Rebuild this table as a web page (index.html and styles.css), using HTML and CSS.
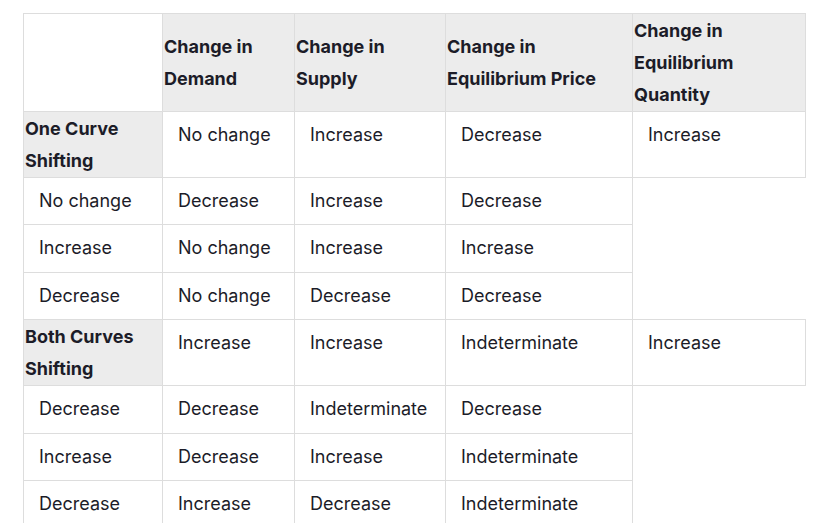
FILE: index.html
```html
<!DOCTYPE html>
<html>
<head>
<meta charset="utf-8">
<link rel="stylesheet" href="styles.css">
</head>
<body>
<div class="wrap">
<table class="grid">
  <colgroup>
    <col class="c1"><col class="c2"><col class="c3"><col class="c4"><col class="c5">
  </colgroup>
  <tr class="head">
    <td class="blank"></td>
    <th>Change in Demand</th>
    <th>Change in Supply</th>
    <th>Change in Equilibrium Price</th>
    <th>Change in Equilibrium Quantity</th>
  </tr>
  <tr>
    <th class="rowhead">One Curve Shifting</th>
    <td>No change</td>
    <td>Increase</td>
    <td>Decrease</td>
    <td>Increase</td>
  </tr>
  <tr>
    <td>No change</td>
    <td>Decrease</td>
    <td>Increase</td>
    <td>Decrease</td>
  </tr>
  <tr>
    <td>Increase</td>
    <td>No change</td>
    <td>Increase</td>
    <td>Increase</td>
  </tr>
  <tr>
    <td>Decrease</td>
    <td>No change</td>
    <td>Decrease</td>
    <td>Decrease</td>
  </tr>
  <tr>
    <th class="rowhead">Both Curves Shifting</th>
    <td>Increase</td>
    <td>Increase</td>
    <td>Indeterminate</td>
    <td>Increase</td>
  </tr>
  <tr>
    <td>Decrease</td>
    <td>Decrease</td>
    <td>Indeterminate</td>
    <td>Decrease</td>
  </tr>
  <tr>
    <td>Increase</td>
    <td>Decrease</td>
    <td>Increase</td>
    <td>Indeterminate</td>
  </tr>
  <tr>
    <td>Decrease</td>
    <td>Increase</td>
    <td>Decrease</td>
    <td>Indeterminate</td>
  </tr>
</table>
</div>
</body>
</html>
```
FILE: styles.css
```css
html, body {
  margin: 0;
  padding: 0;
  background: #ffffff;
}
.wrap {
  padding: 13px 0 0 23px;
}
.grid {
  border-collapse: collapse;
  table-layout: fixed;
  width: 783px;
  font-family: Inter, "Noto Sans", sans-serif;
  font-size: 18px;
  color: #1c1c28;
}
.c1 { width: 139px; }
.c2 { width: 132px; }
.c3 { width: 151px; }
.c4 { width: 187px; }
.c5 { width: 173px; }
.grid th, .grid td {
  border: 1px solid #dddddd;
}
.grid th {
  background: #ececec;
  font-weight: 700;
  text-align: left;
  line-height: 32px;
  padding: 1px 1px 0 1px;
  vertical-align: middle;
}
.grid td {
  font-weight: 400;
  line-height: 30.4px;
  padding: 8px 15px;
  vertical-align: top;
}
.grid td.blank {
  background: #ffffff;
  padding: 0;
}
.grid th.rowhead {
  vertical-align: top;
}
```
